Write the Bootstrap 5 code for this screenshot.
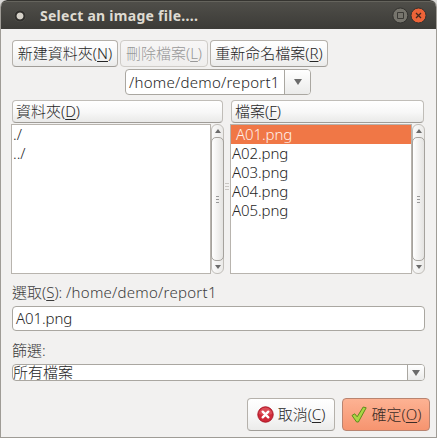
<!DOCTYPE html>
<html lang="zh-Hant">
<head>
<meta charset="utf-8">
<meta name="viewport" content="width=device-width, initial-scale=1">
<title>Select an image file....</title>
<link href="https://cdn.jsdelivr.net/npm/bootstrap@5.3.0/dist/css/bootstrap.min.css" rel="stylesheet">
<style>
html,body{height:100%;overflow:hidden}
body{margin:0;background:#d9d8d6;font-family:"Noto Sans","Noto Sans CJK TC",sans-serif;font-weight:300;font-size:15px;line-height:19px;color:#3c3c3c;white-space:nowrap}
.dialog-window{width:437px;height:438px;background:#f2f1f0;border:solid #9f9c96;border-width:0 1px 1px;border-radius:7px 7px 0 0;overflow:hidden}
.title-bar{height:29px;background:linear-gradient(#504f4a,#3c3b37);border-top:1px solid #353430;box-shadow:inset 0 1px #65645d;margin:0 -1px;padding:1px 10px 0 14px;color:#dfdbd2;border-radius:7px 7px 0 0}
.title-text{font-weight:700;font-size:14px;margin:-1px 0 0 14px;letter-spacing:.27px}
.app-dot{width:12px;height:12px;border-radius:50%;background:radial-gradient(circle,#d5d1c8 0 2.9px,#302f2c 3.9px 5px,#55544e 6px)}
.gbtn{--bs-btn-padding-x:0;--bs-btn-padding-y:0;border:1px solid #b5b1ab;border-bottom-color:#a09d98;border-radius:4px;background:linear-gradient(#fff,#f8f8f8 50%,#ebebea);color:#262626;font-size:15px;font-weight:300;line-height:19px}
.gbtn:disabled{opacity:1;color:#999;border-color:#cfccc8;background:linear-gradient(#f7f6f6,#efeeed)}
.tool-row{height:27px;margin-top:11px;padding-left:11px;gap:2px}
.btn-make{width:106px}
.btn-remove{width:88px}
.btn-rename{width:118px}
.path-combo{width:186px;height:26px;margin:2px 0 0 124px}
.path-combo .path-text{padding-left:3px}
.path-combo .combo-arrow{width:26px}
.combo-shell{border:1px solid #aaa7a1;border-radius:4px;background:#fff;color:#262626}
.combo-arrow{background:linear-gradient(#fff,#ebebea);border-left:1px solid #aaa7a1;border-radius:0 3px 3px 0}
.panes{height:174px;margin:5px 11px 0 10px}
.pane-head{height:23px;border:1px solid #c0bdb8;border-bottom-color:#9f9c97;border-radius:4px;background:linear-gradient(#fff,#f7f7f7 55%,#e9e9e8);color:#262626;margin:0 1px 1px;padding:0 0 1px 3px}
.file-list{border:1px solid #b8b4ae;background:#fff;color:#262626}
.file-list li{height:19px;padding-left:1px}
.file-list li.chosen{background:#f07746;color:#fff0ea;padding-left:5px}
.scroller{width:13px;border:1px solid #c1beb9;border-radius:6px;background:linear-gradient(90deg,#fafafa,#ebeae8)}
.scroll-thumb{margin:0 -1px;border:1px solid #a5a29d;border-radius:5px;background:linear-gradient(90deg,#fff,#e4e3e1)}
.scroll-end{height:12px}
.pane-left{width:213px}
.pane-right{width:195px}
.splitter{width:6px}
.form-area{margin:0 11px}
.entry{height:25px;margin-top:4px;padding-left:3px}
.pick-label{margin-top:9px}
.filter-label{margin-top:10px}
.filter-combo{height:17px;margin-top:4px}
.filter-value{margin-top:-1px}
.filter-arrow{width:17px}
.action-row{margin:17px 6px 0;gap:7px}
.action-row .gbtn{width:88px;height:33px}
.gbtn.accept{background:linear-gradient(#fdb293,#f6946f);border-color:#b98470;color:#3a2c27}
.name-text{letter-spacing:-.1px}
.path-text{letter-spacing:.26px}
u{text-underline-offset:2px;text-decoration-thickness:1px}
svg{display:block;flex-shrink:0}
</style>
<script src="https://cdn.jsdelivr.net/npm/bootstrap@5.3.0/dist/js/bootstrap.bundle.min.js"></script>
</head>
<body>
<main class="dialog-window d-flex flex-column">
  <header class="title-bar d-flex align-items-center flex-shrink-0">
    <span class="app-dot"></span>
    <span class="title-text">Select an image file....</span>
    <svg class="ms-auto" width="35" height="17" viewBox="0 0 35 17">
      <circle cx="8.3" cy="8.5" r="7.5" fill="#77756d" stroke="#33322f"/>
      <path d="M5.5 5.5h6v6h-6z" fill="none" stroke="#3b3a36"/>
      <circle cx="26.5" cy="8.5" r="7.5" fill="#ee6338" stroke="#33322f"/>
      <path d="M24 6l5 5m0-5l-5 5" stroke="#46281e" stroke-width="1.3"/>
    </svg>
  </header>

  <div class="tool-row d-flex flex-shrink-0">
    <button class="btn gbtn btn-make" type="button">新建資料夾(<u>N</u>)</button>
    <button class="btn gbtn btn-remove" type="button" disabled>刪除檔案(<u>L</u>)</button>
    <button class="btn gbtn btn-rename" type="button">重新命名檔案(<u>R</u>)</button>
  </div>

  <div class="path-combo combo-shell d-flex flex-shrink-0">
    <span class="flex-grow-1 d-flex align-items-center path-text">/home/demo/report1</span>
    <span class="combo-arrow d-flex align-items-center justify-content-center"><svg width="8" height="6"><path d="M0 0h8L4 6z" fill="#6b6b6b"/></svg></span>
  </div>

  <section class="panes d-flex flex-shrink-0">
    <div class="pane-left d-flex flex-column">
      <div class="pane-head d-flex align-items-center">資料夾(<u>D</u>)</div>
      <div class="d-flex flex-grow-1">
        <ul class="file-list list-unstyled mb-0 flex-grow-1"><li>./</li><li>../</li></ul>
        <div class="scroller d-flex flex-column">
          <span class="scroll-end d-flex align-items-center justify-content-center"><svg width="6" height="4"><path d="M0 4h6L3 0z" fill="#6b6b6b"/></svg></span>
          <span class="scroll-thumb flex-grow-1 d-flex align-items-center justify-content-center"><svg width="3" height="7"><path d="M0 .5h3M0 3.5h3M0 6.5h3" stroke="#999"/></svg></span>
          <span class="scroll-end d-flex align-items-center justify-content-center"><svg width="6" height="4"><path d="M0 0h6L3 4z" fill="#6b6b6b"/></svg></span>
        </div>
      </div>
    </div>
    <div class="splitter d-flex align-items-center justify-content-center"><svg width="4" height="8"><path d="M0 .5h4M0 3.5h4M0 6.5h4" stroke="#c9c6c2"/></svg></div>
    <div class="pane-right d-flex flex-column">
      <div class="pane-head d-flex align-items-center">檔案(<u>F</u>)</div>
      <div class="d-flex flex-grow-1">
        <ul class="file-list name-text list-unstyled mb-0 flex-grow-1"><li class="chosen">A01.png</li><li>A02.png</li><li>A03.png</li><li>A04.png</li><li>A05.png</li></ul>
        <div class="scroller d-flex flex-column">
          <span class="scroll-end d-flex align-items-center justify-content-center"><svg width="6" height="4"><path d="M0 4h6L3 0z" fill="#6b6b6b"/></svg></span>
          <span class="scroll-thumb flex-grow-1 d-flex align-items-center justify-content-center"><svg width="3" height="7"><path d="M0 .5h3M0 3.5h3M0 6.5h3" stroke="#999"/></svg></span>
          <span class="scroll-end d-flex align-items-center justify-content-center"><svg width="6" height="4"><path d="M0 0h6L3 4z" fill="#6b6b6b"/></svg></span>
        </div>
      </div>
    </div>
  </section>

  <section class="form-area d-flex flex-column flex-shrink-0">
    <div class="pick-label">選取(<u>S</u>): <span class="path-text">/home/demo/report1</span></div>
    <div class="entry combo-shell d-flex align-items-center name-text">A01.png</div>
    <div class="filter-label">篩選:</div>
    <div class="filter-combo combo-shell d-flex">
      <span class="filter-value flex-grow-1 d-flex align-items-center">所有檔案</span>
      <span class="combo-arrow filter-arrow d-flex align-items-center justify-content-center"><svg width="8" height="6"><path d="M0 0h8L4 6z" fill="#6b6b6b"/></svg></span>
    </div>
  </section>

  <footer class="action-row d-flex justify-content-end flex-shrink-0">
    <button class="btn gbtn d-flex align-items-center justify-content-center gap-1" type="button">
      <svg width="17" height="17" viewBox="0 0 17 17"><circle cx="8.5" cy="8.5" r="7.7" fill="#cf2938" stroke="#a91525"/><path d="M2 8a6.5 6.5 0 0 1 13 0c-4 1.5-9 1.5-13 0z" fill="#e5646c" opacity=".6"/><path d="M5.7 5.7l5.6 5.6m0-5.6l-5.6 5.6" stroke="#fff" stroke-width="2.4" stroke-linecap="round"/></svg>
      <span>取消(<u>C</u>)</span>
    </button>
    <button class="btn gbtn accept d-flex align-items-center justify-content-center gap-1" type="button">
      <svg width="17" height="17" viewBox="0 0 17 17"><path d="M1 9.5l2.7-1.7 2.5 3L12.2 1l3 .8L7.4 16H5.6z" fill="#a9d544" stroke="#5d8a1c" stroke-linejoin="round"/></svg>
      <span>確定(<u>O</u>)</span>
    </button>
  </footer>
</main>
</body>
</html>
